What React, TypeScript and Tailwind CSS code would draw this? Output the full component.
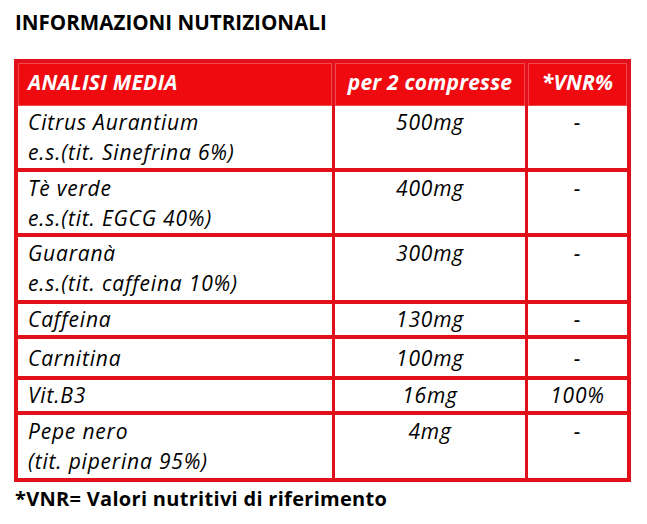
import React from "react";

type Row = {
  name: string[];
  qty: string;
  vnr: string;
  h: string;
  pt: string;
};

const rows: Row[] = [
  { name: ["Citrus Aurantium", "e.s.(tit. Sinefrina 6%)"], qty: "500mg", vnr: "-", h: "h-[62px]", pt: "pt-[1px]" },
  { name: ["Tè verde", "e.s.(tit. EGCG 40%)"], qty: "400mg", vnr: "-", h: "h-[65px]", pt: "pt-[1px]" },
  { name: ["Guaranà", "e.s.(tit. caffeina 10%)"], qty: "300mg", vnr: "-", h: "h-[67px]", pt: "pt-[1px]" },
  { name: ["Caffeina"], qty: "130mg", vnr: "-", h: "h-[35px]", pt: "pt-0" },
  { name: ["Carnitina"], qty: "100mg", vnr: "-", h: "h-[41px]", pt: "pt-[4px]" },
  { name: ["Vit.B3"], qty: "16mg", vnr: "100%", h: "h-[35px]", pt: "pt-0" },
  { name: ["Pepe nero", "(tit. piperina 95%)"], qty: "4mg", vnr: "-", h: "h-[67px]", pt: "pt-[1px]" },
];

const App: React.FC = () => {
  return (
    <div className="w-[647px] h-[524px] bg-white pl-[14px] pt-[7px] font-['Open_Sans',_'Liberation_Sans',_sans-serif] text-black">
      <h1 className="pl-[1px] text-[20.6px] font-bold leading-[30px]">
        INFORMAZIONI NUTRIZIONALI
      </h1>

      {/* tabella */}
      <div className="mt-[22px] w-[617px] border-4 border-[#e2101a]">
        <div className="grid grid-cols-[314px_193px_102px] h-[43px] bg-[#ee0a0f] text-white text-[21px] font-bold italic leading-[30px] tracking-[0.2px]">
          <div className="pl-[10px] pt-[4px] shadow-[inset_0_0_0_1px_rgba(255,255,255,0.25)]">
            ANALISI MEDIA
          </div>
          <div className="border-l-[3px] border-[#e2101a] pt-[4px] text-center shadow-[inset_0_0_0_1px_rgba(255,255,255,0.25)]">
            per 2 compresse
          </div>
          <div className="border-l-[3px] border-[#e2101a] pt-[4px] text-center shadow-[inset_0_0_0_1px_rgba(255,255,255,0.25)]">
            *VNR%
          </div>
        </div>

        {rows.map((row, index) => (
          <div
            key={index}
            className={`grid grid-cols-[314px_193px_102px] text-[21px] italic leading-[30px] tracking-[0.8px] ${
              index > 0 ? "border-t-4 border-[#e2101a]" : ""
            } ${row.h}`}
          >
            <div className={`pl-[10px] ${row.pt}`}>
              {row.name.map((line, i) => (
                <div key={i}>{line}</div>
              ))}
            </div>
            <div className={`border-l-[3px] border-[#e2101a] text-center ${row.pt}`}>
              {row.qty}
            </div>
            <div className={`border-l-[3px] border-[#e2101a] text-center ${row.pt}`}>
              {row.vnr}
            </div>
          </div>
        ))}
      </div>

      <p className="mt-[2px] pl-[1px] text-[20px] font-bold leading-[30px] tracking-[0.3px]">
        *VNR= Valori nutritivi di riferimento
      </p>
    </div>
  );
};

export default App;
